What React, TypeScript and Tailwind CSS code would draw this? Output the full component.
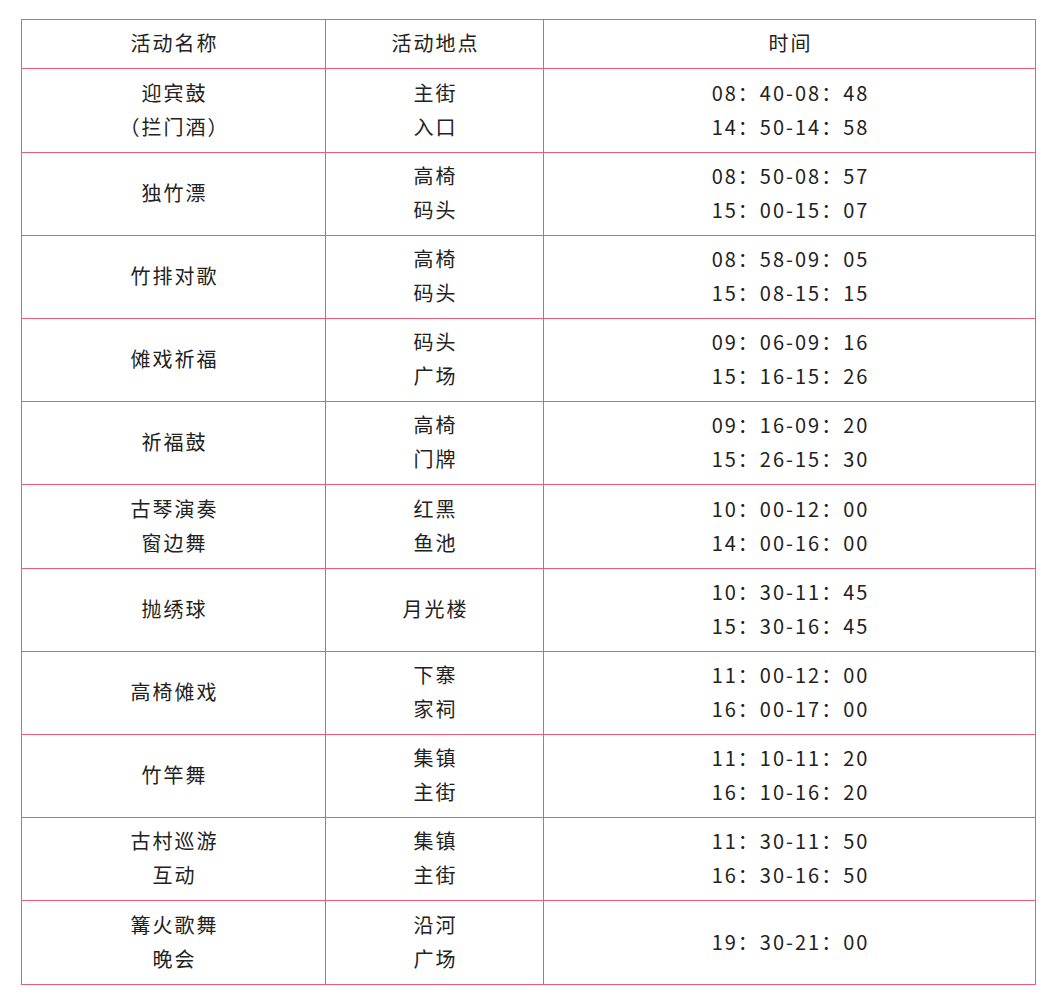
const rows: { name: string[]; place: string[]; time: string[]; h: number }[] = [
    { name: ['迎宾鼓', '（拦门酒）'], place: ['主街', '入口'], time: ['08：40-08：48', '14：50-14：58'], h: 84 },
    { name: ['独竹漂'], place: ['高椅', '码头'], time: ['08：50-08：57', '15：00-15：07'], h: 83 },
    { name: ['竹排对歌'], place: ['高椅', '码头'], time: ['08：58-09：05', '15：08-15：15'], h: 83 },
    { name: ['傩戏祈福'], place: ['码头', '广场'], time: ['09：06-09：16', '15：16-15：26'], h: 83 },
    { name: ['祈福鼓'], place: ['高椅', '门牌'], time: ['09：16-09：20', '15：26-15：30'], h: 83 },
    { name: ['古琴演奏', '窗边舞'], place: ['红黑', '鱼池'], time: ['10：00-12：00', '14：00-16：00'], h: 84 },
    { name: ['抛绣球'], place: ['月光楼'], time: ['10：30-11：45', '15：30-16：45'], h: 83 },
    { name: ['高椅傩戏'], place: ['下寨', '家祠'], time: ['11：00-12：00', '16：00-17：00'], h: 83 },
    { name: ['竹竿舞'], place: ['集镇', '主街'], time: ['11：10-11：20', '16：10-16：20'], h: 83 },
    { name: ['古村巡游', '互动'], place: ['集镇', '主街'], time: ['11：30-11：50', '16：30-16：50'], h: 83 },
    { name: ['篝火歌舞', '晚会'], place: ['沿河', '广场'], time: ['19：30-21：00'], h: 84 },
];

function Lines({ items }: { items: string[] }) {
    return (
        <>
            {items.map((t, i) => (
                <div key={i}>{t}</div>
            ))}
        </>
    );
}

const cell = 'border border-[#ee5a78] p-0 pb-[2px] pl-[2px] text-center align-middle font-normal';

export default function App() {
    return (
        <div className="min-h-[1003px] bg-white pl-[21px] pt-[19px] font-['Noto_Sans_CJK_SC','Noto_Sans',sans-serif] text-[20px] leading-[34px] tracking-[2px] text-[#222]">
            <table className="w-[1015px] table-fixed border-collapse">
                <colgroup>
                    <col className="w-[304px]" />
                    <col className="w-[218px]" />
                    <col className="w-[492px]" />
                </colgroup>
                <thead>
                    <tr className="h-[49px]">
                        <th className={cell}>活动名称</th>
                        <th className={cell}>活动地点</th>
                        <th className={cell}>时间</th>
                    </tr>
                </thead>
                <tbody>
                    {rows.map((r, i) => (
                        <tr key={i} style={{ height: r.h }}>
                            <td className={cell}>
                                <Lines items={r.name} />
                            </td>
                            <td className={cell}>
                                <Lines items={r.place} />
                            </td>
                            <td className={cell}>
                                <Lines items={r.time} />
                            </td>
                        </tr>
                    ))}
                </tbody>
            </table>
        </div>
    );
}
